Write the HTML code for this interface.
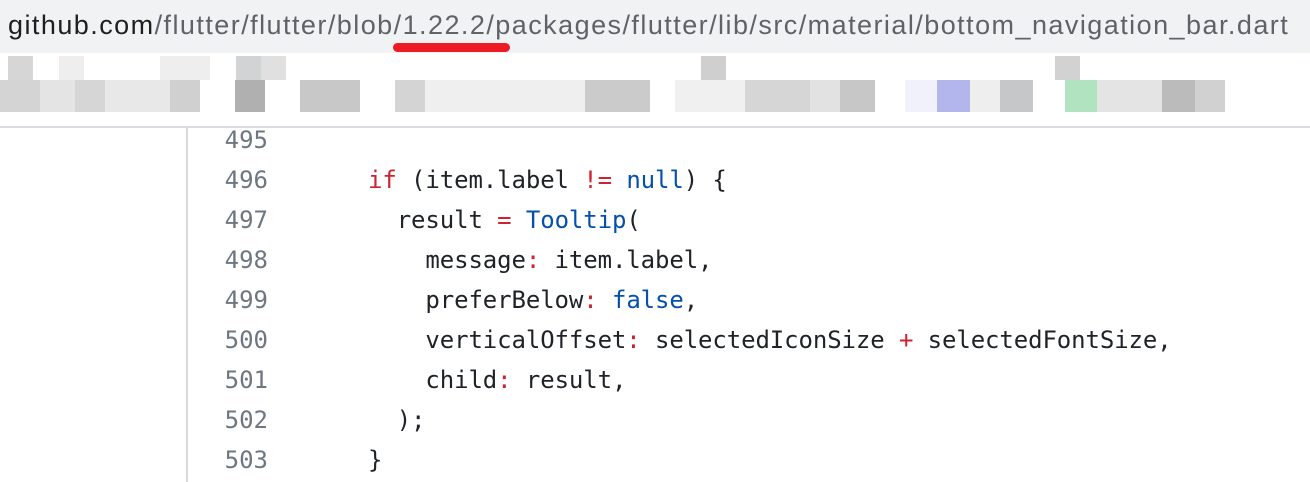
<!DOCTYPE html>
<html><head><meta charset="utf-8"><style>
body{margin:0;width:1310px;height:482px;overflow:hidden;background:#fff;position:relative;font-family:"Liberation Sans",sans-serif}
.hdr{position:absolute;left:0;top:0;width:1310px;height:53px;background:#f1f2f4}
.url{position:absolute;left:8px;top:10px;font-size:27px;color:#5f6368;white-space:nowrap;letter-spacing:1.45px}
.url b{font-weight:normal;color:#1f1f1f}
.ul{position:absolute;left:393px;top:43px;width:117px;height:9px;border-radius:5px;background:#ed1c24}
.px{position:absolute}
.top{position:absolute;left:0;top:126px;width:1310px;height:2px;background:#d8dbe0}
.gut{position:absolute;left:186px;top:128px;width:2px;height:354px;background:#d8dbe0}
.ln{position:absolute;left:190px;width:78px;text-align:right;color:#6e7781}
.code,.ln{font-family:"DejaVu Sans Mono","Liberation Mono",monospace;font-size:24px;line-height:40px;height:40px}
.code{position:absolute;left:368px;color:#1f2328;white-space:pre;letter-spacing:-0.1px}
.k{color:#cf222e}.b{color:#0550ae}
</style></head><body>
<div class="hdr"></div>
<div class="url"><b>github.com</b>/flutter/flutter/blob/1.22.2/packages/flutter/lib/src/material/bottom_navigation_bar.dart</div>
<div class="ul"></div>
<div class="px" style="left:8px;top:56px;width:25px;height:24px;background:#d6d6d6"></div>
<div class="px" style="left:59px;top:56px;width:25px;height:24px;background:#eeeeee"></div>
<div class="px" style="left:160px;top:56px;width:50px;height:24px;background:#eeeeee"></div>
<div class="px" style="left:236px;top:56px;width:25px;height:24px;background:#d2d3d4"></div>
<div class="px" style="left:261px;top:56px;width:25px;height:24px;background:#e0e0e0"></div>
<div class="px" style="left:701px;top:56px;width:25px;height:24px;background:#cfcfcf"></div>
<div class="px" style="left:1055px;top:56px;width:25px;height:24px;background:#d2d2d2"></div>
<div class="px" style="left:0;top:80px;width:40px;height:32px;background:#d4d4d4"></div>
<div class="px" style="left:40px;top:80px;width:35px;height:32px;background:#e4e4e4"></div>
<div class="px" style="left:75px;top:80px;width:30px;height:32px;background:#d6d6d6"></div>
<div class="px" style="left:105px;top:80px;width:65px;height:32px;background:#e8e8e8"></div>
<div class="px" style="left:170px;top:80px;width:30px;height:32px;background:#d0d0d0"></div>
<div class="px" style="left:235px;top:80px;width:30px;height:32px;background:#b0b0b0"></div>
<div class="px" style="left:300px;top:80px;width:60px;height:32px;background:#c8c8c8"></div>
<div class="px" style="left:395px;top:80px;width:30px;height:32px;background:#d4d4d4"></div>
<div class="px" style="left:425px;top:80px;width:160px;height:32px;background:#efefef"></div>
<div class="px" style="left:585px;top:80px;width:65px;height:32px;background:#cbcbcb"></div>
<div class="px" style="left:675px;top:80px;width:70px;height:32px;background:#f0f0f0"></div>
<div class="px" style="left:745px;top:80px;width:65px;height:32px;background:#d6d6d6"></div>
<div class="px" style="left:810px;top:80px;width:30px;height:32px;background:#e2e2e2"></div>
<div class="px" style="left:840px;top:80px;width:35px;height:32px;background:#c7c7c7"></div>
<div class="px" style="left:905px;top:80px;width:32px;height:32px;background:#f1f1fb"></div>
<div class="px" style="left:937px;top:80px;width:33px;height:32px;background:#b2b6ec"></div>
<div class="px" style="left:970px;top:80px;width:30px;height:32px;background:#eeeeee"></div>
<div class="px" style="left:1000px;top:80px;width:33px;height:32px;background:#c6c7c8"></div>
<div class="px" style="left:1065px;top:80px;width:32px;height:32px;background:#b2e3c0"></div>
<div class="px" style="left:1097px;top:80px;width:65px;height:32px;background:#e4e4e4"></div>
<div class="px" style="left:1162px;top:80px;width:33px;height:32px;background:#bbbbbb"></div>
<div class="px" style="left:1195px;top:80px;width:30px;height:32px;background:#d0d1d0"></div>
<div class="top"></div>
<div class="gut"></div>
<div class="ln" style="top:120px">495</div>
<div class="ln" style="top:160px">496</div>
<div class="ln" style="top:200px">497</div>
<div class="ln" style="top:240px">498</div>
<div class="ln" style="top:280px">499</div>
<div class="ln" style="top:320px">500</div>
<div class="ln" style="top:360px">501</div>
<div class="ln" style="top:400px">502</div>
<div class="ln" style="top:440px">503</div>
<div class="code" style="top:160px"><span class="k">if</span> (item.label <span class="k">!=</span> <span class="b">null</span>) {</div>
<div class="code" style="top:200px">  result <span class="k">=</span> <span class="b">Tooltip</span>(</div>
<div class="code" style="top:240px">    message<span class="k">:</span> item.label,</div>
<div class="code" style="top:280px">    preferBelow<span class="k">:</span> <span class="b">false</span>,</div>
<div class="code" style="top:320px">    verticalOffset<span class="k">:</span> selectedIconSize <span class="k">+</span> selectedFontSize,</div>
<div class="code" style="top:360px">    child<span class="k">:</span> result,</div>
<div class="code" style="top:400px">  );</div>
<div class="code" style="top:440px">}</div>
</body></html>
